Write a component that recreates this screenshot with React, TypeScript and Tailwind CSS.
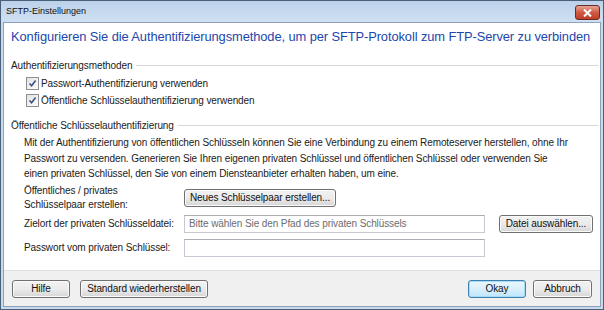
import React from "react";

const font = { fontFamily: '"Liberation Sans", Arial, sans-serif' };

function Check() {
  return (
    <span className="w-[13px] h-[13px] border border-[#8f8f8f] bg-gradient-to-br from-[#e2e2e2] to-[#ffffff] flex items-center justify-center shrink-0">
      <svg width="9" height="9" viewBox="0 0 9 9">
        <path d="M1.5 4.5 L3.6 6.8 L7.6 1.6" fill="none" stroke="#3b4f8a" strokeWidth="1.6" />
      </svg>
    </span>
  );
}

function Btn({ children, w, focus }: { children: React.ReactNode; w: string; focus?: boolean }) {
  return (
    <div
      className={`${w} h-[18px] shrink-0 rounded-[3px] border flex items-center justify-center whitespace-nowrap text-[10px] tracking-[-0.1px] text-[#111] ${
        focus
          ? "border-[#3c7fb1] bg-gradient-to-b from-[#eaf6fd] via-[#d9f0fc] to-[#bee6fd] shadow-[inset_0_0_0_1px_#a9dbf6]"
          : "border-[#707070] bg-gradient-to-b from-[#f2f2f2] via-[#ebebeb] to-[#d6d6d6] shadow-[inset_0_0_0_1px_#fbfbfb]"
      }`}
    >
      {children}
    </div>
  );
}

function Section({ title }: { title: string }) {
  return (
    <div className="h-[12px] flex items-center gap-[4px] text-[10px] text-[#1a1a1a] pr-[2px]">
      <span>{title}</span>
      <div className="flex-1 h-px bg-[#d5d9dd]" />
    </div>
  );
}

export default function App() {
  return (
    <div className="w-[604px] h-[310px] bg-[#c8daee] border border-[#4a5f78] flex flex-col overflow-hidden" style={font}>
      <div className="h-[21px] shrink-0 flex items-center justify-between pl-[5px] pr-[3px] bg-gradient-to-b from-[#bcd2ea] to-[#d0e0f2]">
        <span className="text-[9px] text-[#111]">SFTP-Einstellungen</span>
        <div className="w-[25px] h-[15px] mt-[2px] rounded-[3px] border border-[#6b2a24] bg-gradient-to-b from-[#e8a496] via-[#cf5a44] to-[#c23c27] flex items-center justify-center">
          <svg width="9" height="8" viewBox="0 0 9 8">
            <path d="M1 0.5 L8 7.5 M8 0.5 L1 7.5" stroke="#fff" strokeWidth="2" />
          </svg>
        </div>
      </div>
      <div className="flex-1 flex flex-col mx-[2px] mb-[2px] border border-[#8da2ba] bg-white">
        <div className="flex-1 flex flex-col pl-[7px] pt-[5px] text-[10px] tracking-[-0.1px] text-[#1a1a1a]">
          <div className="h-[18px] flex items-center text-[12.9px] tracking-[-0.1px] text-[#1c47ad] whitespace-nowrap">
            Konfigurieren Sie die Authentifizierungsmethode, um per SFTP-Protokoll zum FTP-Server zu verbinden
          </div>
          <div className="mt-[13px]">
            <Section title="Authentifizierungsmethoden" />
          </div>
          <div className="flex flex-col gap-[4px] pl-[15px] mt-[6px]">
            <div className="flex items-center gap-[2px] h-[13px]">
              <Check />
              <span>Passwort-Authentifizierung verwenden</span>
            </div>
            <div className="flex items-center gap-[2px] h-[13px]">
              <Check />
              <span>Öffentliche Schlüsselauthentifizierung verwenden</span>
            </div>
          </div>
          <div className="mt-[12px]">
            <Section title="Öffentliche Schlüsselauthentifizierung" />
          </div>
          <div className="pl-[13px] mt-[4px] leading-[15.5px] whitespace-nowrap">
            Mit der Authentifizierung von öffentlichen Schlüsseln können Sie eine Verbindung zu einem Remoteserver herstellen, ohne Ihr
            <br />
            Passwort zu versenden. Generieren Sie Ihren eigenen privaten Schlüssel und öffentlichen Schlüssel oder verwenden Sie
            <br />
            einen privaten Schlüssel, den Sie von einem Diensteanbieter erhalten haben, um eine.
          </div>
          <div className="pl-[13px] mt-[2px] flex flex-col">
            <div className="flex items-center h-[28px]">
              <div className="w-[160px] leading-[14px]">
                Öffentliches / privates
                <br />
                Schlüsselpaar erstellen:
              </div>
              <Btn w="w-[152px]">Neues Schlüsselpaar erstellen...</Btn>
            </div>
            <div className="flex items-center h-[18px] mt-[3px]">
              <div className="w-[160px]">Zielort der privaten Schlüsseldatei:</div>
              <div className="w-[301px] h-[18px] border border-[#c5c9d1] border-t-[#abadb3] flex items-center px-[4px] text-[#6d6d6d]">
                Bitte wählen Sie den Pfad des privaten Schlüssels
              </div>
              <div className="w-[14px]" />
              <Btn w="w-[94px]">Datei auswählen...</Btn>
            </div>
            <div className="flex items-center h-[18px] mt-[6px]">
              <div className="w-[160px]">Passwort vom privaten Schlüssel:</div>
              <div className="w-[301px] h-[18px] border border-[#c5c9d1] border-t-[#abadb3]" />
            </div>
          </div>
        </div>
        <div className="h-[36px] shrink-0 bg-[#f0f0f0] border-t border-[#dfdfdf] flex items-center pl-[8px] pr-[8px]">
          <Btn w="w-[58px]">Hilfe</Btn>
          <div className="w-[10px]" />
          <Btn w="w-[128px]">Standard wiederherstellen</Btn>
          <div className="flex-1" />
          <Btn w="w-[58px]" focus>Okay</Btn>
          <div className="w-[7px]" />
          <Btn w="w-[59px]">Abbruch</Btn>
        </div>
      </div>
    </div>
  );
}
